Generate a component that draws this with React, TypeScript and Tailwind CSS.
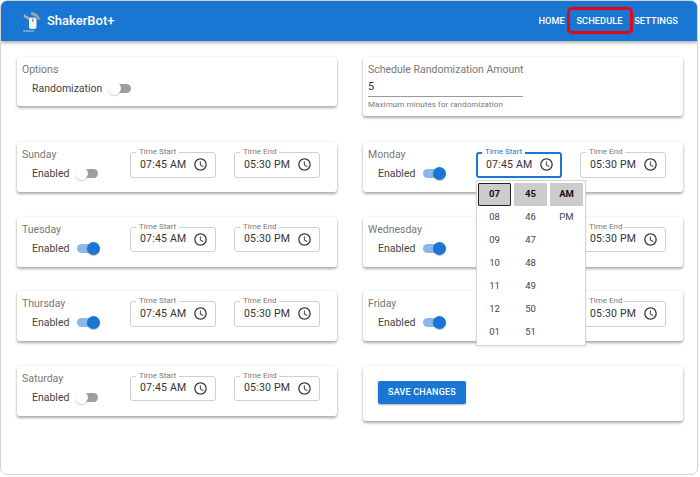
import React from "react";

function ClockIcon() {
  return (
    <svg viewBox="0 0 24 24" className="w-[15px] h-[15px] fill-[#333] shrink-0">
      <path d="M11.99 2C6.47 2 2 6.48 2 12s4.47 10 9.99 10C17.52 22 22 17.52 22 12S17.52 2 11.99 2zM12 20c-4.42 0-8-3.58-8-8s3.58-8 8-8 8 3.58 8 8-3.58 8-8 8z" />
      <path d="M12.5 7H11v6l5.25 3.15.75-1.23-4.5-2.67z" />
    </svg>
  );
}

function Toggle({ on }: { on: boolean }) {
  return (
    <div className="relative w-[25px] h-[13px] shrink-0">
      <div
        className={`absolute left-[2px] top-[2px] w-[21px] h-[9px] rounded-full ${
          on ? "bg-[#8bb8e8]" : "bg-[#9e9e9e]"
        }`}
      />
      <div
        className={
          on
            ? "absolute right-0 top-0 w-[13px] h-[13px] rounded-full bg-[#1976d2] shadow-[0_1px_1px_rgba(0,0,0,0.25)]"
            : "absolute left-0 top-0 w-[13px] h-[13px] rounded-full bg-white shadow-[0_1px_1px_rgba(0,0,0,0.2)]"
        }
      />
    </div>
  );
}

function TimeField({
  label,
  value,
  focused,
  children,
}: {
  label: string;
  value: string;
  focused?: boolean;
  children?: React.ReactNode;
}) {
  return (
    <div
      className={`relative w-[86px] h-[25.5px] rounded-[3px] flex items-center justify-between ${
        focused ? "border-2 border-[#1976d2] pl-[8px] pr-[6px]" : "border border-[#cfcfcf] pl-[9px] pr-[7px]"
      }`}
    >
      <span
        className={`absolute bg-white px-[3px] text-[8px] leading-[10px] whitespace-nowrap ${
          focused ? "left-[4px] top-[-7px] text-[#1976d2]" : "left-[5px] top-[-6px] text-[#777]"
        }`}
      >
        {label}
      </span>
      <span className="text-[10.5px] tracking-[0.2px] text-[#333] whitespace-nowrap">{value}</span>
      <ClockIcon />
      {children}
    </div>
  );
}

function TimePopup() {
  const hours = ["07", "08", "09", "10", "11", "12", "01"];
  const minutes = ["45", "46", "47", "48", "49", "50", "51"];
  const periods = ["AM", "PM"];

  const cell = "h-[23px] flex items-center justify-center text-[9.5px] text-[#444]";
  const selected = "h-[23px] flex items-center justify-center text-[9.5px] font-bold text-[#111] bg-[#cccccc]";

  return (
    <div className="absolute z-10 left-[-2px] top-[26px] w-[110px] h-[166px] bg-white border border-[#d6d6d6] shadow-[0_1px_2px_rgba(0,0,0,0.1)] pl-[1px] pt-[2px] flex gap-[3px]">
      <div className="w-[33px]">
        {hours.map((h, i) => (
          <div
            key={h}
            className={
              i === 0
                ? "h-[23px] flex items-center justify-center text-[9.5px] font-bold text-[#111] bg-[#cccccc] border border-[#222] rounded-[1px]"
                : cell
            }
          >
            {h}
          </div>
        ))}
      </div>
      <div className="w-[33px]">
        {minutes.map((m, i) => (
          <div key={m} className={i === 0 ? selected : cell}>
            {m}
          </div>
        ))}
      </div>
      <div className="w-[33px]">
        {periods.map((p, i) => (
          <div key={p} className={i === 0 ? selected : cell}>
            {p}
          </div>
        ))}
      </div>
    </div>
  );
}

function DayCard({ day, on, open }: { day: string; on: boolean; open?: boolean }) {
  return (
    <div className="h-[50px] bg-white rounded-[3px] shadow-[0_2px_3px_rgba(0,0,0,0.32),0_0_3px_rgba(0,0,0,0.08)] pl-[5px] flex">
      <div className="w-[108px] pt-[6px]">
        <div className="text-[10.5px] leading-[13px] text-[#777]">{day}</div>
        <div className="flex items-center gap-[6px] pl-[10px] mt-[6px]">
          <span className="text-[10.5px] leading-[13px] text-[#444]">Enabled</span>
          <Toggle on={on} />
        </div>
      </div>
      <div className="flex gap-[18px] pt-[10px]">
        <TimeField label="Time Start" value="07:45 AM" focused={open}>
          {open && <TimePopup />}
        </TimeField>
        <TimeField label="Time End" value="05:30 PM" />
      </div>
    </div>
  );
}

export default function App() {
  return (
    <div
      className="w-[700px] h-[477px] bg-white overflow-hidden"
      style={{ fontFamily: "Roboto, sans-serif" }}
    >
      <div className="w-[698px] h-[475px] border border-[#d4d4d4] rounded-[7px] overflow-hidden">
        {/* Header */}
        <header className="h-[40px] bg-[#1976d2] shadow-[0_2px_3px_rgba(0,0,0,0.3)] flex items-center justify-between pl-[22px] pr-[19px]">
          <div className="flex items-center gap-[5px]">
            <svg viewBox="0 0 19 21" className="w-[19px] h-[21px]">
              <path d="M1 3 L7 6.5 L6 9 L0.5 6 Z" fill="#a3adb6" />
              <path d="M8 1 Q14 1 17.5 8 L15 9 Q12.5 4.5 8 4 Z" fill="#98a4ae" />
              <rect x="6" y="6.5" width="7.5" height="11.5" rx="2.5" fill="#f4f4f4" />
              <rect x="9" y="7.5" width="1.5" height="3.5" fill="#8d99a3" />
              <path d="M0 20 H11" stroke="#c3ccd4" strokeWidth="1" fill="none" />
            </svg>
            <span className="text-[13px] font-medium text-white">ShakerBot+</span>
          </div>
          <nav className="flex items-center gap-[11.5px] text-[9.2px] font-medium text-white tracking-[0.1px]">
            <a>HOME</a>
            <a className="relative">
              SCHEDULE
              <span className="absolute left-[-9px] right-[-10px] top-[-7px] bottom-[-6px] border-[3.5px] border-[#e30613] rounded-[5px]" />
            </a>
            <a>SETTINGS</a>
          </nav>
        </header>

        {/* Schedule grid */}
        <div className="grid grid-cols-[320px_320px] gap-x-[26px] gap-y-[24.5px] pl-[16px] pt-[16px]">
          <div className="h-[49px] bg-white rounded-[3px] shadow-[0_2px_3px_rgba(0,0,0,0.32),0_0_3px_rgba(0,0,0,0.08)] pl-[5px] pt-[6px]">
            <div className="text-[10.5px] leading-[13px] text-[#777]">Options</div>
            <div className="flex items-center gap-[6px] pl-[10px] mt-[6px]">
              <span className="text-[10.5px] leading-[13px] text-[#444]">Randomization</span>
              <Toggle on={false} />
            </div>
          </div>
          <div className="h-[59px] mb-[1.5px] bg-white rounded-[3px] shadow-[0_2px_3px_rgba(0,0,0,0.32),0_0_3px_rgba(0,0,0,0.08)] pl-[5px] pt-[6px]">
            <div className="w-[155px] border-b border-[#999] pb-[2px] whitespace-nowrap">
              <div className="text-[10.5px] leading-[13px] text-[#777]">Schedule Randomization Amount</div>
              <div className="text-[11px] leading-[14px] text-[#333] mt-[4px]">5</div>
            </div>
            <div className="text-[8px] leading-[11px] text-[#777] mt-[2px] tracking-[0.1px]">
              Maximum minutes for randomization
            </div>
          </div>

          <DayCard day="Sunday" on={false} />
          <DayCard day="Monday" on open />
          <DayCard day="Tuesday" on />
          <DayCard day="Wednesday" on />
          <DayCard day="Thursday" on />
          <DayCard day="Friday" on />
          <DayCard day="Saturday" on={false} />

          <div className="h-[55px] bg-white rounded-[3px] shadow-[0_2px_3px_rgba(0,0,0,0.32),0_0_3px_rgba(0,0,0,0.08)] pl-[15px] pt-[15.5px]">
            <button className="block w-[88px] h-[23px] bg-[#1976d2] rounded-[2px] text-[9px] font-medium text-white tracking-[0.2px] shadow-[0_1px_2px_rgba(0,0,0,0.3)]">
              SAVE CHANGES
            </button>
          </div>
        </div>
      </div>
    </div>
  );
}
